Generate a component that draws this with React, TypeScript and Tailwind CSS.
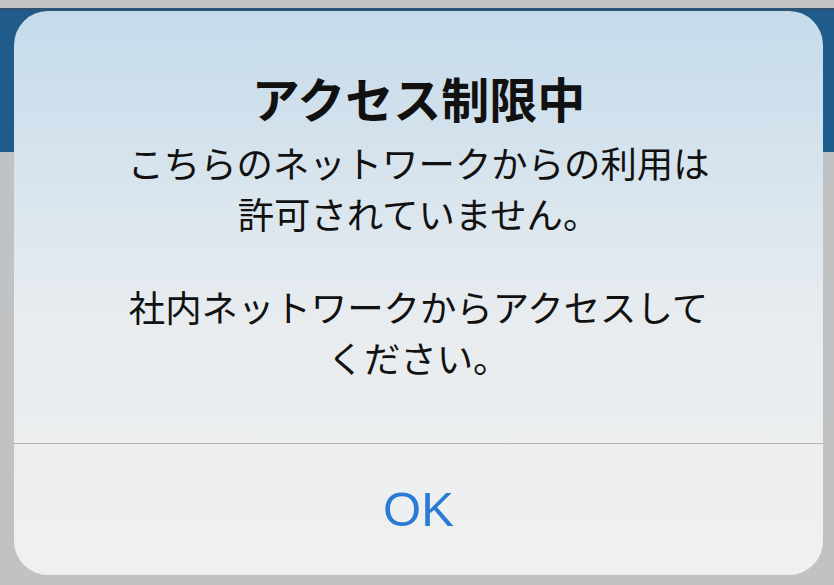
export default function App() {
  return (
    <div className="relative h-[585px] w-[834px] overflow-hidden bg-[#c1c2c4] font-['Noto_Sans_CJK_JP',sans-serif]">
      {/* page behind the alert */}
      <div className="h-[8px] bg-[#c3c3c3]" />
      <div className="h-[144px] border-t-[3px] border-[#2d5475] bg-[#1f5b8b]" />

      {/* alert */}
      <div className="absolute left-[14px] top-[11px] flex h-[564px] w-[809px] flex-col overflow-hidden rounded-[34px] bg-gradient-to-b from-[#c5dbeb] via-[#e8ecef] via-55% to-[#f0f0f0]">
        <div className="flex flex-1 flex-col items-center pt-[58px] text-center text-[#111]">
          <h1 className="text-[48px] font-bold leading-[56px]">アクセス制限中</h1>
          <p className="mt-[12px] text-[36.4px] leading-[51px]">
            こちらのネットワークからの利用は
            <br />
            許可されていません。
          </p>
          <p className="mt-[42px] text-[36.4px] leading-[51px]">
            社内ネットワークからアクセスして
            <br />
            ください。
          </p>
        </div>
        <div className="h-px bg-[#b5b5b5]" />
        <button className="flex h-[131px] items-center justify-center font-['Liberation_Sans',sans-serif] text-[49px] text-[#2a7bd6]">
          OK
        </button>
      </div>
    </div>
  );
}
